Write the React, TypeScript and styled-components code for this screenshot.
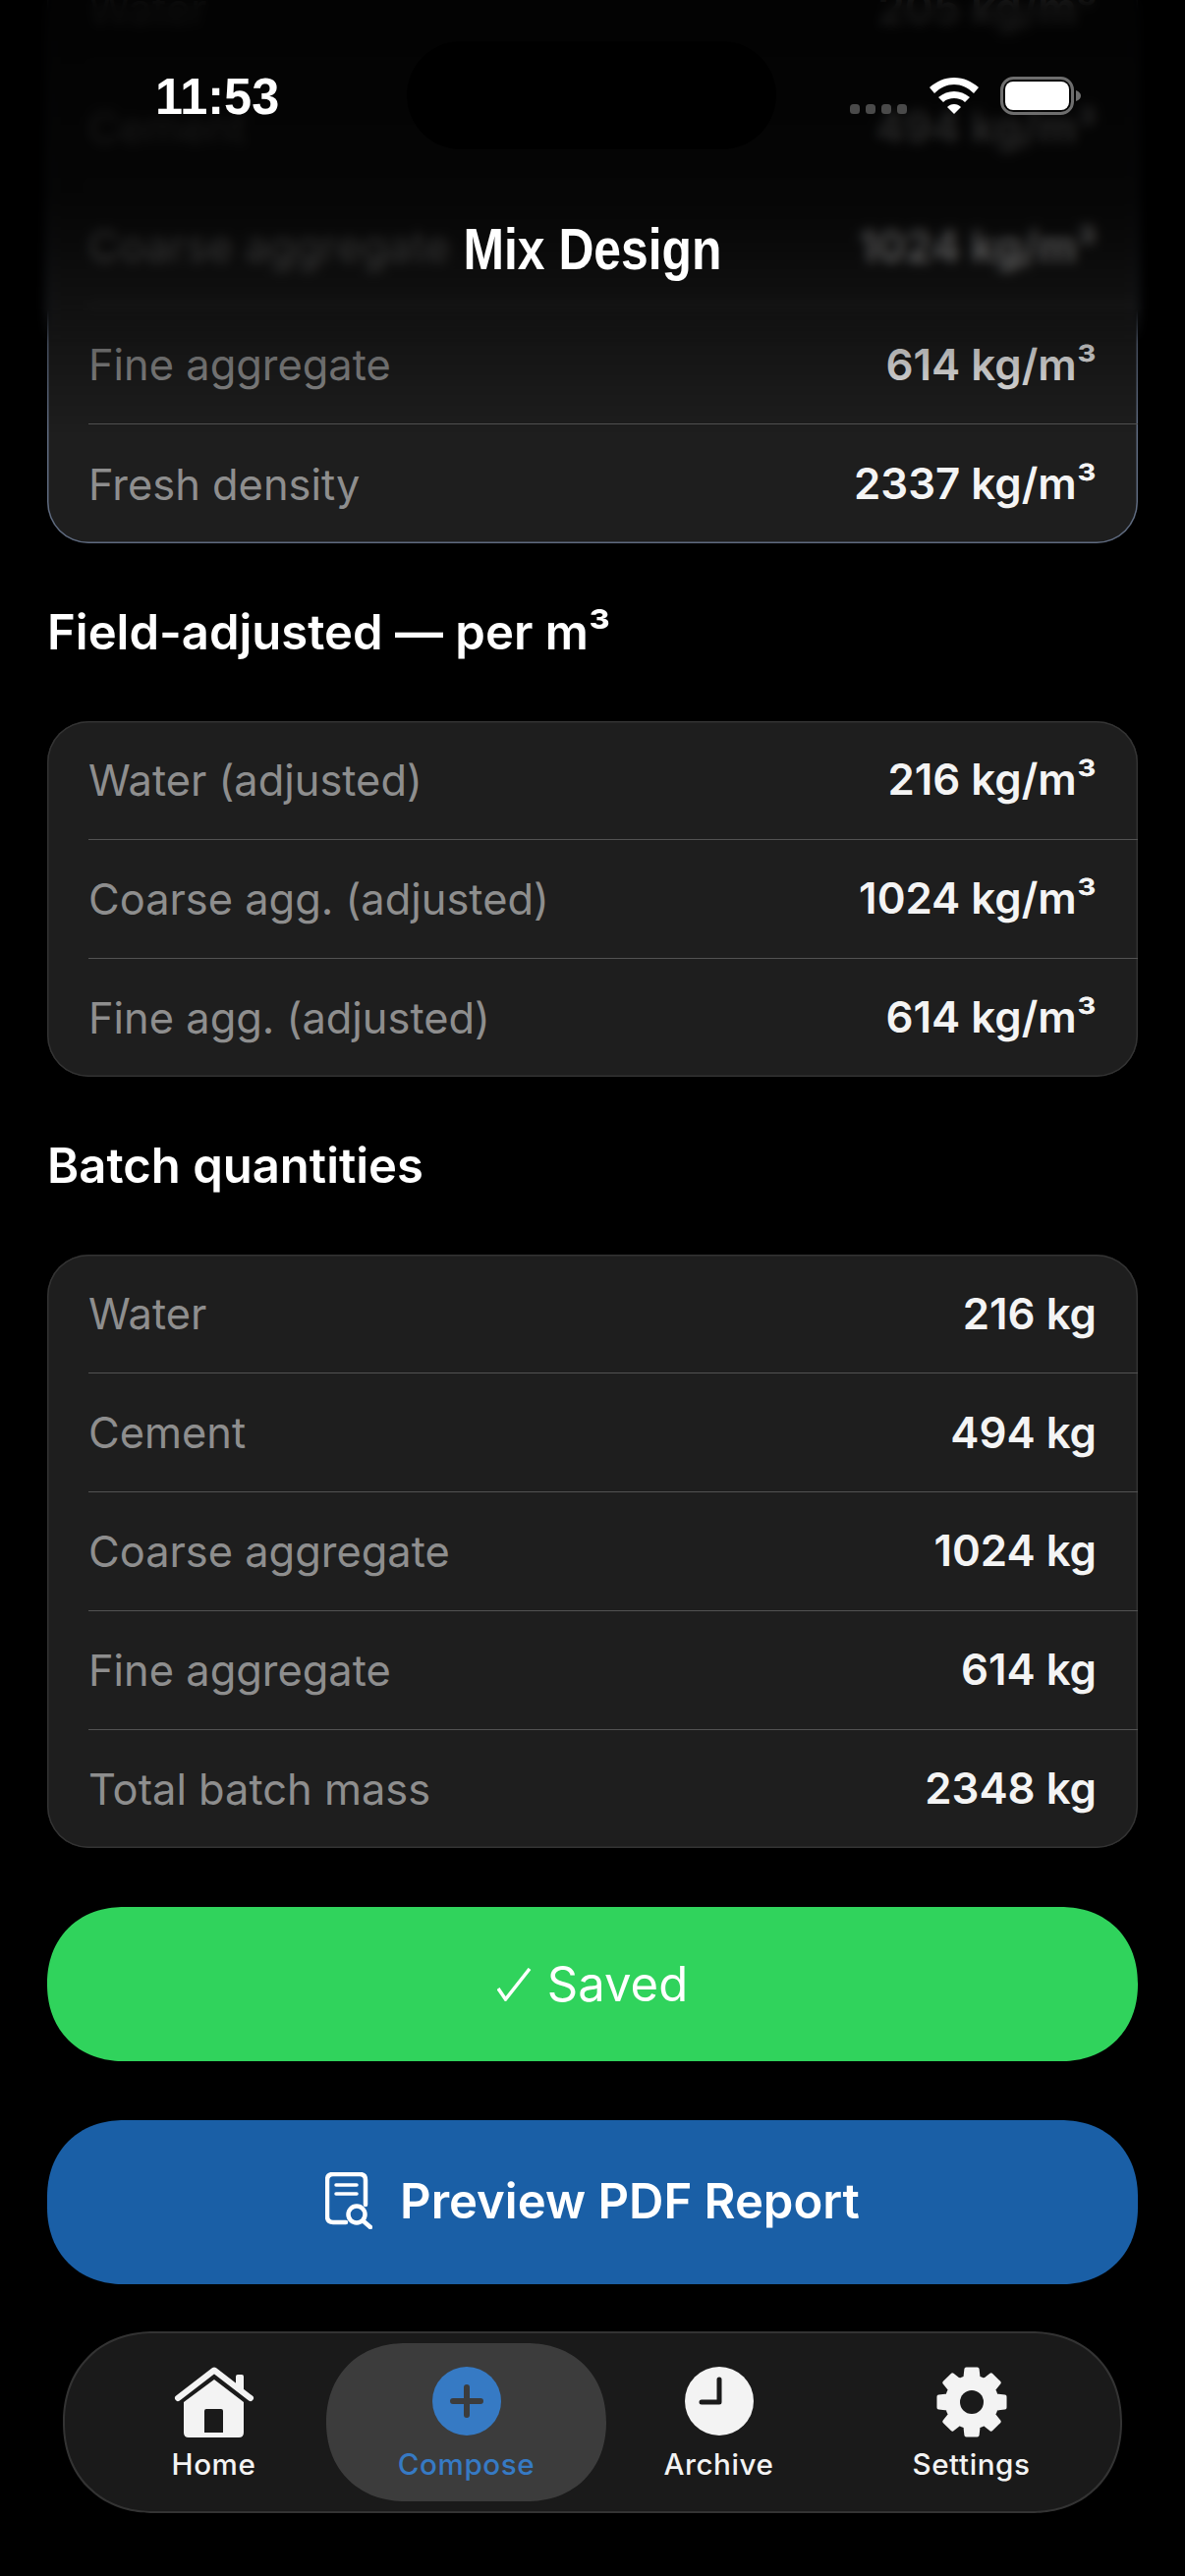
import React from 'react'
import styled, { createGlobalStyle } from 'styled-components'

const GlobalStyle = createGlobalStyle`
  html, body {
    margin: 0;
    padding: 0;
    background: #000;
  }
  body {
    font-family: Inter, "Liberation Sans", sans-serif;
    color: #f2f2f2;
  }
`

const Screen = styled.div`
  position: relative;
  width: 1206px;
  height: 2622px;
  overflow: hidden;
  background: #000;
`

// scrolled content, first card runs off the top of the screen
const Scroller = styled.div`
  display: flex;
  flex-direction: column;
  margin-top: -51px;
  padding: 0 48px;
`

const Card = styled.div<{ $accent?: boolean }>`
  background: #1e1e1e;
  box-shadow: inset 0 0 0 1.5px ${(p) => (p.$accent ? '#5f6b80' : '#333333')};
  border-radius: 42px;
  overflow: hidden;
`

const Row = styled.div`
  display: flex;
  align-items: center;
  justify-content: space-between;
  height: 120.8px;
  margin-left: 42px;
  padding-right: 42px;
  border-bottom: 1.5px solid #525252;
  box-sizing: border-box;
  &:last-child {
    border-bottom: none;
  }
`

const Label = styled.span`
  font-size: 43.4px;
  color: #8e8e8e;
`

const Value = styled.span`
  font-size: 43.8px;
  font-weight: 600;
  color: #f4f4f4;
`

const SectionTitle = styled.h2`
  margin: 0;
  height: 181px;
  display: flex;
  align-items: center;
  font-size: 49px;
  font-weight: 600;
  color: #fff;
`

const Actions = styled.div`
  display: flex;
  flex-direction: column;
  gap: 60px;
  margin-top: 60px;
`

const ActionButton = styled.div<{ $bg: string; $h: number; $weight: number; $gap: number; $lift: number }>`
  display: flex;
  align-items: center;
  justify-content: center;
  box-sizing: border-box;
  gap: ${(p) => p.$gap}px;
  height: ${(p) => p.$h}px;
  padding-bottom: ${(p) => p.$lift}px;
  background: ${(p) => p.$bg};
  border-radius: 78px;
  corner-shape: superellipse(1.1);
  color: #fff;
  font-size: 49px;
  font-weight: ${(p) => p.$weight};
`

const BlurLayer = styled.div`
  position: absolute;
  left: 0;
  right: 0;
  top: 0;
  height: 350px;
  backdrop-filter: blur(6px);
  mask-image: linear-gradient(to bottom, #000 90%, transparent 100%);
`

const DimLayer = styled.div`
  position: absolute;
  left: 0;
  right: 0;
  top: 0;
  height: 440px;
  background: linear-gradient(
    to bottom,
    rgba(0, 0, 0, 0.9) 0,
    rgba(0, 0, 0, 0.8) 200px,
    rgba(0, 0, 0, 0.66) 250px,
    rgba(0, 0, 0, 0.43) 311px,
    rgba(0, 0, 0, 0.08) 420px,
    rgba(0, 0, 0, 0) 440px
  );
`

const Island = styled.div`
  position: absolute;
  left: 414px;
  top: 42px;
  width: 376px;
  height: 110px;
  border-radius: 55px;
  background: #000;
`

const Clock = styled.div`
  position: absolute;
  left: 158px;
  top: 68px;
  font-family: "Liberation Sans", Arial, sans-serif;
  font-size: 52px;
  line-height: 60px;
  font-weight: 700;
  color: #fff;
  transform: scaleX(0.97);
  transform-origin: left center;
`

const StatusIcons = styled.div`
  position: absolute;
  left: 865px;
  top: 78px;
  display: flex;
  align-items: flex-start;
`

const Title = styled.div`
  position: absolute;
  left: 0;
  right: 0;
  top: 218px;
  text-align: center;
  font-family: "Liberation Sans", Arial, sans-serif;
  font-size: 60px;
  line-height: 72px;
  font-weight: 700;
  color: #fff;
  transform: scaleX(0.83);
`

const TabBar = styled.nav`
  position: absolute;
  left: 64px;
  top: 2373px;
  width: 1078px;
  height: 185px;
  box-sizing: border-box;
  padding: 10px 23px;
  display: grid;
  grid-template-columns: repeat(4, 257px);
  background: #1a1a1a;
  border: 2px solid #333;
  border-radius: 92px;
  corner-shape: superellipse(1.1);
`

const Tab = styled.div<{ $active?: boolean }>`
  position: relative;
  display: flex;
  flex-direction: column;
  align-items: center;
  gap: 8px;
  padding-top: 23px;
  color: ${(p) => (p.$active ? '#367ac4' : '#f3f3f3')};
  ${(p) =>
    p.$active &&
    `
    &::before {
      content: '';
      position: absolute;
      inset: 0 -14px;
      border-radius: 81px;
      corner-shape: superellipse(1.1);
      background: #3c3c3c;
    }
  `}
  & > * {
    position: relative;
  }
`

const TabLabel = styled.span`
  font-size: 29.6px;
  line-height: 36px;
  font-weight: 450;
  letter-spacing: 0.6px;
`

const SignalDots = styled.svg`
  margin-top: 28px;
  margin-right: 23px;
`

const Wifi = styled.svg`
  margin-top: 1px;
`

const Battery = styled.svg`
  margin-left: 22px;
`

const HomeIcon = () => (
  <svg width="84" height="74" viewBox="0 0 84 74">
    <path d="M5 33 L42 4.500 L79 33" fill="none" stroke="#f3f3f3" strokeWidth="6" strokeLinecap="round" strokeLinejoin="round" />
    <path d="M64 22 V11 q0 -2 2 -2 h4 q2 0 2 2 V28 Z" fill="#f3f3f3" />
    <path
      fillRule="evenodd"
      d="M42 14 L72 37 V68 q0 5 -5 5 H16 q-5 0 -5 -5 V37 Z M32 46 q0 -2 2 -2 h15 q2 0 2 2 V68 H32 Z"
      fill="#f3f3f3"
    />
  </svg>
)

const ComposeIcon = () => (
  <svg width="70" height="74" viewBox="0 -1 70 74">
    <circle cx="35" cy="35" r="35" fill="#367ac4" />
    <path d="M35 21 V49 M21 35 H49" stroke="#3c3c3c" strokeWidth="6" strokeLinecap="round" />
  </svg>
)

const ClockIcon = () => (
  <svg width="70" height="74" viewBox="0 -1 70 74">
    <circle cx="35" cy="35" r="35" fill="#f3f3f3" />
    <path d="M35 13 V36 H17" fill="none" stroke="#1a1a1a" strokeWidth="5" strokeLinecap="round" strokeLinejoin="round" />
  </svg>
)

// eight rounded teeth around the hub
const gearPath = () => {
  const pt = (r: number, deg: number) => {
    const a = ((deg - 90) * Math.PI) / 180
    return `${(36 + r * Math.cos(a)).toFixed(2)} ${(36 + r * Math.sin(a)).toFixed(2)}`
  }
  let d = ''
  for (let i = 0; i < 8; i++) {
    const c = i * 45
    d += `${i === 0 ? 'M' : 'L'}${pt(25.5, c - 15)} L${pt(34, c - 9.5)} L${pt(34, c + 9.5)} L${pt(25.5, c + 15)} `
    d += `A25.5 25.5 0 0 1 ${pt(25.5, c + 30)} `
  }
  return d + 'Z'
}

const GearIcon = () => (
  <svg width="72" height="74" viewBox="0 -1 72 74">
    <path d={gearPath()} fill="#f3f3f3" stroke="#f3f3f3" strokeWidth="4" strokeLinejoin="round" />
    <circle cx="36" cy="36" r="12" fill="#1a1a1a" />
  </svg>
)

const ReportIcon = () => (
  <svg width="48" height="58" viewBox="0 0 48 58" fill="none" stroke="#fff" strokeWidth="4.500" strokeLinecap="round">
    <path d="M21 51 H8 q-6 0 -6 -6 V8 q0 -6 6 -6 H35 q6 0 6 6 V33" />
    <path d="M11 13 H32 M11 22 H32" strokeWidth="3.500" />
    <circle cx="32" cy="43" r="8.500" />
    <path d="M38.500 49.500 L46 56" />
  </svg>
)

const CheckIcon = () => (
  <svg width="36" height="34" viewBox="0 0 36 34" fill="none" stroke="#fff" strokeWidth="3.500">
    <path d="M1 21 L8.500 32 L33 1" />
  </svg>
)

const WifiIcon = () => (
  <Wifi width="50" height="38" viewBox="0 0 50 38">
    <path d="M25 0 C35 0 43 4 50 10 L45 16 C39 10 32 7 25 7 C18 7 11 10 5 16 L0 10 C7 4 15 0 25 0 Z" fill="#fff" />
    <path d="M25 14 C31 14 36 16 41 20 L36 25 C33 22 29 21 25 21 C21 21 17 22 14 25 L9 20 C14 16 19 14 25 14 Z" fill="#fff" />
    <path d="M25 27 C28 27 30 28 32 30 L25 37 L18 30 C20 28 22 27 25 27 Z" fill="#fff" />
  </Wifi>
)

const DotsIcon = () => (
  <SignalDots width="58" height="10" viewBox="0 0 58 10">
    {[0, 16, 32, 48].map((x) => (
      <rect key={x} x={x} y="0" width="10" height="10" rx="3.500" fill="#4a4a4a" />
    ))}
  </SignalDots>
)

const BatteryIcon = () => (
  <Battery width="82" height="39" viewBox="0 0 82 39">
    <rect x="1.500" y="1.500" width="72" height="36" rx="12" fill="none" stroke="#6e6e6e" strokeWidth="3" />
    <rect x="5" y="5" width="65" height="29" rx="8" fill="#fff" />
    <path d="M77 14 q5 2 5 5.500 q0 3.500 -5 5.500 Z" fill="#6e6e6e" />
  </Battery>
)

const designRows = [
  ['Water', '205 kg/m³'],
  ['Cement', '494 kg/m³'],
  ['Coarse aggregate', '1024 kg/m³'],
  ['Fine aggregate', '614 kg/m³'],
  ['Fresh density', '2337 kg/m³'],
]

const adjustedRows = [
  ['Water (adjusted)', '216 kg/m³'],
  ['Coarse agg. (adjusted)', '1024 kg/m³'],
  ['Fine agg. (adjusted)', '614 kg/m³'],
]

const batchRows = [
  ['Water', '216 kg'],
  ['Cement', '494 kg'],
  ['Coarse aggregate', '1024 kg'],
  ['Fine aggregate', '614 kg'],
  ['Total batch mass', '2348 kg'],
]

const renderRows = (rows: string[][]) =>
  rows.map(([label, value]) => (
    <Row key={label}>
      <Label>{label}</Label>
      <Value>{value}</Value>
    </Row>
  ))

const App: React.FC = () => {
  return (
    <Screen>
      <GlobalStyle />
      <Scroller>
        <Card $accent>{renderRows(designRows)}</Card>
        <SectionTitle>Field-adjusted — per m³</SectionTitle>
        <Card>{renderRows(adjustedRows)}</Card>
        <SectionTitle>Batch quantities</SectionTitle>
        <Card>{renderRows(batchRows)}</Card>
        <Actions>
          <ActionButton $bg="#30d35c" $h={157} $weight={400} $gap={15} $lift={0}>
            <CheckIcon />
            Saved
          </ActionButton>
          <ActionButton $bg="#1a5fa6" $h={167} $weight={600} $gap={28} $lift={3}>
            <ReportIcon />
            Preview PDF Report
          </ActionButton>
        </Actions>
      </Scroller>
      <BlurLayer />
      <DimLayer />
      <Island />
      <Clock>11:53</Clock>
      <StatusIcons>
        <DotsIcon />
        <WifiIcon />
        <BatteryIcon />
      </StatusIcons>
      <Title>Mix Design</Title>
      <TabBar>
        <Tab>
          <HomeIcon />
          <TabLabel>Home</TabLabel>
        </Tab>
        <Tab $active>
          <ComposeIcon />
          <TabLabel>Compose</TabLabel>
        </Tab>
        <Tab>
          <ClockIcon />
          <TabLabel>Archive</TabLabel>
        </Tab>
        <Tab>
          <GearIcon />
          <TabLabel>Settings</TabLabel>
        </Tab>
      </TabBar>
    </Screen>
  )
}

export default App
